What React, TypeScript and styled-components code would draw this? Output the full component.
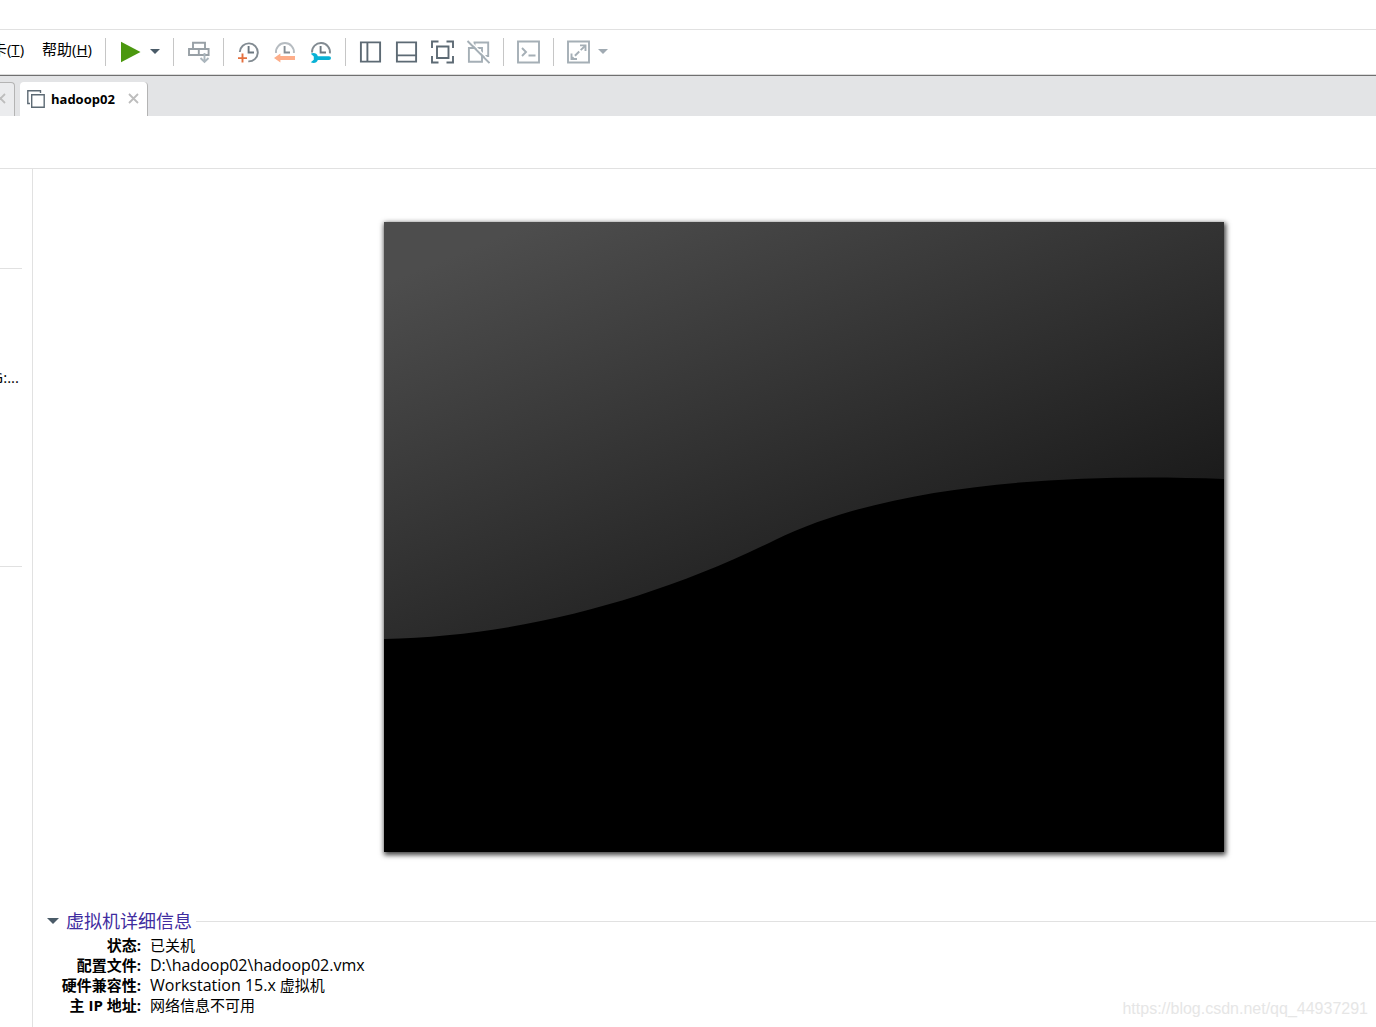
import React from 'react';
import styled, { createGlobalStyle } from 'styled-components';

const GlobalStyle = createGlobalStyle`
  * { box-sizing: border-box; }
  body {
    margin: 0;
    background: #fff;
    color: #000;
    font: 15px/20px "Open Sans", "Noto Sans CJK SC", sans-serif;
  }
  button { font: inherit; color: inherit; border: 0; padding: 0; background: none; }
  svg { display: block; fill: none; }
`;

const Page = styled.div`
  display: flex;
  flex-direction: column;
  min-height: 100vh;
  overflow: hidden;
`;

const TitleStrip = styled.header`
  height: 30px;
  border-bottom: 1px solid #e1e1e1;
`;

const Toolbar = styled.div`
  display: flex;
  align-items: center;
  height: 46px;
  padding-bottom: 2px;
  border-bottom: 1px solid #707070;
  box-shadow: inset 0 -1px #dcdcdc;
`;

const Menu = styled.nav`
  display: flex;
  justify-content: flex-end;
  gap: 18px;
  width: 92px;
  overflow: hidden;
  padding-bottom: 6px;
`;

const MenuButton = styled.button`
  flex: none;
  white-space: nowrap;
`;

const Separator = styled.span`
  width: 1px;
  height: 28px;
  margin: 0 12px 0 13px;
  background: #c6c6c6;
`;

const Group = styled.div<{ $gap?: number }>`
  display: flex;
  align-items: center;
  gap: ${p => p.$gap ?? 12}px;
`;

const IconButton = styled.button`
  flex: none;
`;

const TabBar = styled.div`
  display: flex;
  align-items: flex-end;
  gap: 5px;
  height: 40px;
  background: #e3e4e6;
`;

const Tab = styled.div<{ $active?: boolean }>`
  display: flex;
  align-items: center;
  height: 34px;
  padding: ${p => (p.$active ? '0 8px 0 7px' : '0 8px 0 0')};
  background: ${p => (p.$active ? '#fff' : '#ebecee')};
  border: solid #b4b4b4;
  border-width: ${p => (p.$active ? '0 1px 0 0' : '1px 1px 0 0')};
  border-radius: ${p => (p.$active ? '4px 4px 0 0' : '0 4px 0 0')};
`;

const TabTitle = styled.button`
  display: flex;
  align-items: center;
  gap: 6px;
  margin-right: 13px;
  font-size: 13px;
  font-weight: 700;
`;

const CloseButton = styled.button<{ $cut?: boolean }>`
  width: ${p => (p.$cut ? 6 : 11)}px;
  padding-bottom: 2px;
  overflow: hidden;
  display: flex;
  justify-content: flex-end;
  svg { flex: none; }
`;

const ActionStrip = styled.div`
  height: 53px;
  border-bottom: 1px solid #e1e1e1;
`;

const Body = styled.div`
  display: flex;
  flex: 1;
`;

const Sidebar = styled.aside`
  flex: none;
  width: 33px;
  padding-top: 99px;
  border-right: 1px solid #e1e1e1;
`;

const DeviceSection = styled.section`
  display: flex;
  justify-content: flex-end;
  width: 22px;
  height: 298px;
  padding: 98px 3px 0 0;
  overflow: hidden;
  border-top: 1px solid #e1e1e1;
  white-space: nowrap;
`;

const Main = styled.main`
  flex: 1;
  min-width: 0;
`;

const Screen = styled.div`
  width: 840px;
  margin: 53px 0 0 351px;
  box-shadow: 1px 2px 5px 1px rgba(0, 0, 0, 0.75);
`;

const Details = styled.section`
  padding: 59px 0 12px 14px;
`;

const DetailsHeader = styled.button`
  display: flex;
  align-items: center;
  width: 100%;
  height: 20px;
  color: #3f2da0;
  font-size: 18px;
  &::after {
    content: "";
    flex: 1;
    height: 1px;
    margin-left: 4px;
    background: #e1e1e1;
  }
`;

const DetailsTitle = styled.span`
  margin-left: 7px;
`;

const DetailsList = styled.dl`
  display: grid;
  grid-template-columns: 94px 1fr;
  grid-auto-rows: 20px;
  column-gap: 9px;
  margin: 4px 0 0;
  dt { text-align: right; font-weight: 700; white-space: nowrap; }
  dd { margin: 0; }
`;

const Latin = styled.span`
  font-size: 16px;
`;

const Watermark = styled.div`
  position: absolute;
  right: 8px;
  bottom: 8px;
  color: #e6e6e6;
  font: 16px/20px "Liberation Sans", sans-serif;
`;

const DARK = '#5d6a74';
const PALE = '#a5afb6';

const Glyph = ({ children, color = DARK }: { children: React.ReactNode; color?: string }) => (
  <svg width="24" height="24" viewBox="0 0 24 24" stroke={color} strokeWidth="1.9">{children}</svg>
);

const Caret = ({ color = '#4a5b68', width = 10 }: { color?: string; width?: number }) => (
  <svg width={width} height={width / 2} viewBox="0 0 10 5"><path d="M0 0h10L5 5z" fill={color} /></svg>
);

const Cross = () => (
  <svg width="11" height="11" viewBox="0 0 11 11" stroke="#bdbdbd" strokeWidth="1.8">
    <path d="M1 1l9 9M10 1l-9 9" />
  </svg>
);

const Hands = ({ color = '#6b7780' }: { color?: string }) => <path d="M12.6 6v6.500h5.400" stroke={color} />;

export default function App() {
  return (
    <Page>
      <GlobalStyle />
      <TitleStrip />
      <Toolbar>
        <Menu>
          <MenuButton>选项卡(<u>T</u>)</MenuButton>
          <MenuButton>帮助(<u>H</u>)</MenuButton>
        </Menu>
        <Separator />
        <Group $gap={8}>
          <IconButton aria-label="Power on">
            <Glyph><path d="M3 1.700v20.600L22.500 12z" fill="#4b980f" stroke="none" /></Glyph>
          </IconButton>
          <IconButton aria-label="Power options"><Caret /></IconButton>
        </Group>
        <Separator />
        <IconButton aria-label="Send keys">
          <Glyph color="#98a0a6">
            <path d="M7 9V2.800h12V9M3 9h19.600v6H3zM12.800 9v6" />
            <path d="M18.500 16v7" stroke="#fff" strokeWidth="6" />
            <path d="M18.500 13v9M14.500 18l4 4 4-4" stroke="#abb6bd" />
          </Glyph>
        </IconButton>
        <Separator />
        <Group>
          <IconButton aria-label="Take snapshot">
            <Glyph color="#828b92">
              <path d="M3.800 12a9 9 0 1 1 8.500 9.400" />
              <Hands />
              <path d="M2 18.100h9M6.500 13.500v9" stroke="#e5703e" />
            </Glyph>
          </IconButton>
          <IconButton aria-label="Revert snapshot">
            <Glyph color="#b6bcc1">
              <path d="M4 13a9 9 0 1 1 17.900 0" />
              <Hands color="#858e95" />
              <path d="M2 17.900L8.400 13.500v2.400H23v4.200H8.400v2.400z" fill="#fdae8a" stroke="none" />
            </Glyph>
          </IconButton>
          <IconButton aria-label="Manage snapshots">
            <Glyph color="#828b92">
              <path d="M4 12.500a9 9 0 1 1 17.900.8" />
              <Hands />
              <path d="M2.800 13.700c3-1.600 6.200-.4 7 2.500H21q2 0 2 1.900t-2 1.900H9.800c-.8 2.800-4 4-7 2.300l3-2.500v-3.400z" fill="#08b1d5" stroke="none" />
            </Glyph>
          </IconButton>
        </Group>
        <Separator />
        <Group>
          <IconButton aria-label="Show library">
            <Glyph><path d="M2.900 2.400h19.200v19.200H2.900zM9.400 2.500v19" /></Glyph>
          </IconButton>
          <IconButton aria-label="Show thumbnails">
            <Glyph><path d="M2.900 2.400h19.200v19.200H2.900zM3 15.400h19" /></Glyph>
          </IconButton>
          <IconButton aria-label="Full screen">
            <Glyph>
              <path d="M7 6.500h11.500V18H7z" />
              <path d="M2 8V1.500h6.500M16.500 1.500H23V8M23 16v6.500h-6.500M8.500 22.500H2V16" />
            </Glyph>
          </IconButton>
          <IconButton aria-label="Unity mode">
            <Glyph color={PALE}>
              <path d="M2.900 8H16v13.800H2.900zM8.500 8V2.500h13.700V16H16" />
              <path d="M3.500.5l21 21" stroke="#fff" strokeWidth="1.500" />
              <path d="M1.500 1l22 22" />
            </Glyph>
          </IconButton>
        </Group>
        <Separator />
        <IconButton aria-label="Console view">
          <Glyph color={PALE}>
            <path d="M2 1.500h21v21H2z" />
            <path d="M6 8l4 4-4 4M12.500 15.500h7" />
          </Glyph>
        </IconButton>
        <Separator />
        <Group $gap={8}>
          <IconButton aria-label="Stretch guest">
            <Glyph color={PALE}>
              <path d="M2 1.500h21v21H2z" />
              <path d="M14 5.400h5.500v5.500M11 19H5.500v-5.500" />
              <path d="M19 6L6 18.500" strokeDasharray="6 2" />
            </Glyph>
          </IconButton>
          <IconButton aria-label="Stretch options"><Caret color="#a0aab2" /></IconButton>
        </Group>
      </Toolbar>
      <TabBar>
        <Tab><CloseButton $cut aria-label="Close tab"><Cross /></CloseButton></Tab>
        <Tab $active>
          <TabTitle>
            <svg width="18" height="18" viewBox="0 0 18 18" stroke={DARK} strokeWidth="1.4">
              <path d="M4.700 4.700h12.500v12.500H4.700zM3 13.500H.8V.8h12.700V3" />
            </svg>
            hadoop02
          </TabTitle>
          <CloseButton aria-label="Close hadoop02"><Cross /></CloseButton>
        </Tab>
      </TabBar>
      <ActionStrip />
      <Body>
        <Sidebar>
          <DeviceSection>正在使用文件 G:...</DeviceSection>
          <DeviceSection />
        </Sidebar>
        <Main>
          <Screen>
            <svg width="840" height="630" viewBox="0 0 840 630">
              <defs>
                <linearGradient id="glass" gradientUnits="userSpaceOnUse" x1="150" y1="0" x2="341" y2="464">
                  <stop offset="0" stopColor="#4d4d4d" />
                  <stop offset="1" stopColor="#1b1b1b" />
                </linearGradient>
              </defs>
              <path d="M0 0h840v630H0z" fill="#000" />
              <path d="M0 0H840V257C680 251 505 262 391 318C268 379 134 414 0 417z" fill="url(#glass)" />
            </svg>
          </Screen>
          <Details>
            <DetailsHeader>
              <Caret width={12} />
              <DetailsTitle>虚拟机详细信息</DetailsTitle>
            </DetailsHeader>
            <DetailsList>
              <dt>状态:</dt><dd>已关机</dd>
              <dt>配置文件:</dt><dd><Latin>D:\hadoop02\hadoop02.vmx</Latin></dd>
              <dt>硬件兼容性:</dt><dd><Latin>Workstation 15.x</Latin> 虚拟机</dd>
              <dt>主 IP 地址:</dt><dd>网络信息不可用</dd>
            </DetailsList>
          </Details>
        </Main>
      </Body>
      <Watermark>https://blog.csdn.net/qq_44937291</Watermark>
    </Page>
  );
}
